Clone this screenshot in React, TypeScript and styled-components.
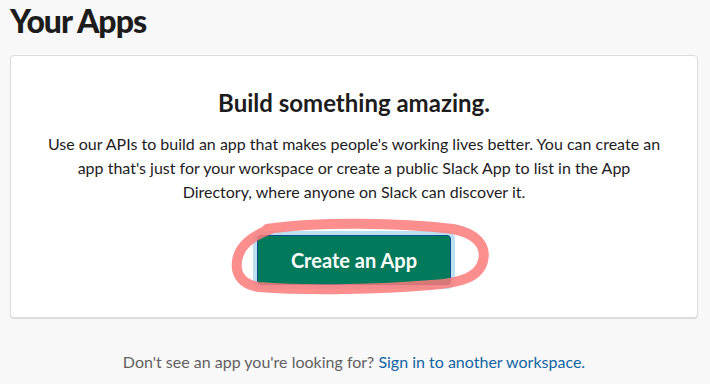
import React from "react";
import styled, { createGlobalStyle } from "styled-components";

const GlobalStyle = createGlobalStyle`
	html, body {
		margin: 0;
		padding: 0;
		background: #f8f8f8;
		font-family: Lato, "Liberation Sans", sans-serif;
		color: #1d1c1d;
	}
`;

const Page = styled.div`
	width: 710px;
	height: 384px;
	padding: 0 12px 0 10px;
	box-sizing: border-box;
	overflow: hidden;
`;

const Title = styled.h1`
	margin: 0;
	padding-top: 1px;
	font-size: 32px;
	line-height: 40px;
	font-weight: 900;
	letter-spacing: -1px;
	color: #1d1c1d;
`;

const Card = styled.section`
	margin-top: 14px;
	background: #fff;
	border: 1px solid #ddd;
	border-radius: 4px;
	box-shadow: 0 1px 1px rgba(0, 0, 0, 0.12);
	padding: 32px 30px 32px;
	display: flex;
	flex-direction: column;
	align-items: center;
	text-align: center;
`;

const Heading = styled.h2`
	margin: 0;
	font-size: 24px;
	line-height: 30px;
	font-weight: 700;
`;

const Blurb = styled.p`
	max-width: 626px;
	margin: 14px 0 31px;
	font-size: 16px;
	line-height: 24px;
`;

const ButtonWrap = styled.div`
	position: relative;
`;

const PrimaryButton = styled.button`
	display: flex;
	align-items: center;
	justify-content: center;
	width: 194px;
	height: 50px;
	box-sizing: border-box;
	background: #007a5a;
	color: #fff;
	border: 1px solid #0b4c8c;
	border-radius: 4px;
	box-shadow: 0 0 0 4px rgba(29, 155, 209, 0.3);
	font-family: inherit;
	font-size: 20px;
	font-weight: 700;
	cursor: pointer;
`;

const Scribble = styled.svg`
	position: absolute;
	left: -26px;
	top: -18px;
	width: 258px;
	height: 84px;
	pointer-events: none;
	overflow: visible;
`;

const Footer = styled.p`
	margin: 32px 0 0;
	text-align: center;
	font-size: 16px;
	line-height: 24px;
	color: #616061;
`;

const Link = styled.a`
	color: #1264a3;
	text-decoration: none;
`;

export default function App() {
	return (
		<Page>
			<GlobalStyle />
			<Title>Your Apps</Title>
			<Card>
				<Heading>Build something amazing.</Heading>
				<Blurb>
					Use our APIs to build an app that makes people's working lives better. You can create an
					app that's just for your workspace or create a public Slack App to list in the App
					Directory, where anyone on Slack can discover it.
				</Blurb>
				<ButtonWrap>
					<PrimaryButton>Create an App</PrimaryButton>
					{/* hand drawn marker loop */}
					<Scribble viewBox="0 0 258 84">
						<path
							d="M36 12 C90 4 170 6 222 12 C244 16 256 28 252 44 C248 60 230 66 200 68 C150 72 80 74 28 70 C12 68 4 58 6 44 C8 30 18 20 40 12"
							fill="none"
							stroke="#fd7a7a"
							strokeOpacity={0.85}
							strokeWidth={10}
							strokeLinecap="round"
						/>
					</Scribble>
				</ButtonWrap>
			</Card>
			<Footer>
				Don't see an app you're looking for? <Link href="#">Sign in to another workspace.</Link>
			</Footer>
		</Page>
	);
}
